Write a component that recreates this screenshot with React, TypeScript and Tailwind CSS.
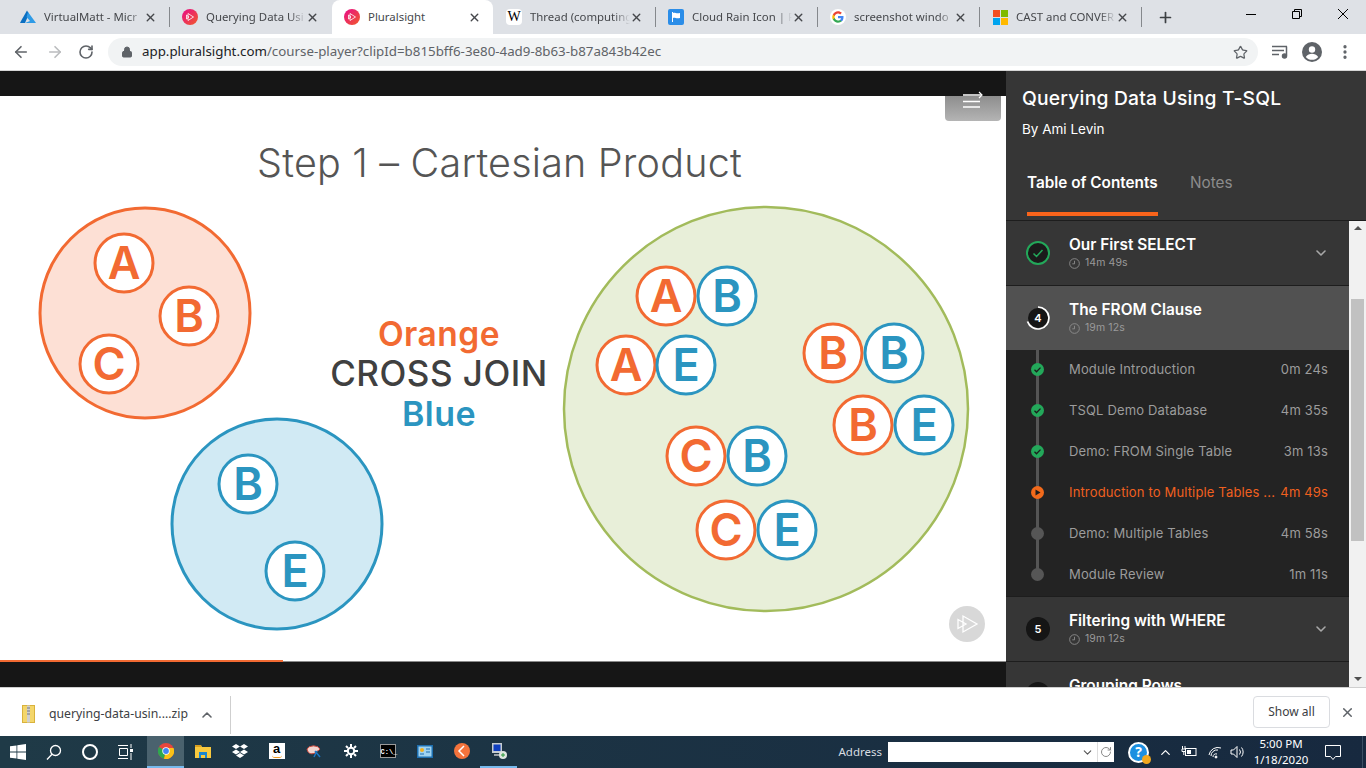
import { ArrowLeft, ArrowRight, ChevronDown, ChevronUp, Lock, MoreVertical, Plus, RotateCw, Star, X } from 'lucide-react'
import type { ReactNode } from 'react'

const UI = "font-['Noto_Sans',sans-serif]"
const PS = "font-['Inter',sans-serif]"

function PsIcon() {
  return (
    <svg width="16" height="16" viewBox="0 0 16 16">
      <defs>
        <linearGradient id="ps" x1="0" y1="0" x2="1" y2="1">
          <stop offset="0" stopColor="#e80a89" />
          <stop offset="1" stopColor="#f15b2a" />
        </linearGradient>
      </defs>
      <circle cx="8" cy="8" r="8" fill="url(#ps)" />
      <path d="M6 4.500v7L11.500 8zM4.500 6v4L7 8z" fill="none" stroke="#fff" strokeWidth="0.800" />
    </svg>
  )
}

function AzureIcon() {
  return (
    <svg width="16" height="14" viewBox="0 0 16 14">
      <path d="M7 0.500 L1 11 L0 13 H5 L9 4z" fill="#0a6fc2" />
      <path d="M8 2 L16 13 H5 L10 11 L6.500 7z" fill="#2f9be6" />
    </svg>
  )
}

function WikiIcon() {
  return (
    <span className="flex h-4 w-4 items-center justify-center rounded-sm bg-white font-['Liberation_Serif',serif] text-[14px] leading-none text-black">
      W
    </span>
  )
}

function FlagIcon() {
  return (
    <svg width="16" height="16" viewBox="0 0 16 16">
      <rect width="16" height="16" rx="2" fill="#2b8de8" />
      <path d="M4 3h1v10H4zM5 4c2-1 3 1 7 0v5c-4 1-5-1-7 0z" fill="#fff" />
    </svg>
  )
}

function GoogleIcon() {
  return (
    <span className="flex h-4 w-4 items-center justify-center rounded-full bg-white">
      <svg width="12" height="12" viewBox="0 0 48 48">
        <path fill="#4285f4" d="M46 24.500c0-1.600-.1-3.100-.4-4.500H24v8.500h12.400c-.5 2.900-2.100 5.300-4.600 7v5.800h7.400C43.500 37.800 46 31.700 46 24.500z" />
        <path fill="#34a853" d="M24 47c6.200 0 11.400-2 15.200-5.700l-7.400-5.800c-2 1.400-4.700 2.200-7.800 2.200-6 0-11.100-4-12.900-9.500H3.500v6C7.300 41.800 15 47 24 47z" />
        <path fill="#fbbc05" d="M11.100 28.200c-.5-1.400-.7-2.800-.7-4.200s.3-2.900.7-4.200v-6H3.500C2 16.900 1 20.300 1 24s.9 7.100 2.500 10.200z" />
        <path fill="#ea4335" d="M24 10.300c3.400 0 6.400 1.200 8.800 3.400l6.600-6.600C35.400 3.400 30.200 1 24 1 15 1 7.300 6.200 3.500 13.800l7.600 6C12.900 14.300 18 10.300 24 10.300z" />
      </svg>
    </span>
  )
}

function MsIcon() {
  return (
    <span className="grid h-[15px] w-[15px] grid-cols-2 gap-px">
      <span className="bg-[#f25022]" />
      <span className="bg-[#7fba00]" />
      <span className="bg-[#00a4ef]" />
      <span className="bg-[#ffb900]" />
    </span>
  )
}

const tabs: { title: string; icon: ReactNode; active?: boolean; sep: boolean }[] = [
  { title: 'VirtualMatt - Micr', icon: <AzureIcon />, sep: true },
  { title: 'Querying Data Usi', icon: <PsIcon />, sep: false },
  { title: 'Pluralsight', icon: <PsIcon />, active: true, sep: false },
  { title: 'Thread (computing', icon: <WikiIcon />, sep: true },
  { title: 'Cloud Rain Icon | F', icon: <FlagIcon />, sep: true },
  { title: 'screenshot windo', icon: <GoogleIcon />, sep: true },
  { title: 'CAST and CONVER', icon: <MsIcon />, sep: true },
]

function ChromeTabs() {
  return (
    <div className={`flex h-[34px] shrink-0 items-end bg-[#dee1e6] pl-2 ${UI}`}>
      {tabs.map((tab) => (
        <div key={tab.title} className="flex h-[34px] w-[162px] shrink-0 items-center">
          <div
            className={`relative flex h-full flex-1 items-center pl-3 ${tab.active ? 'rounded-t-lg bg-white' : ''}`}
          >
            <span className="flex w-4 shrink-0 justify-center">{tab.icon}</span>
            <span
              className={`ml-2 w-[100px] text-[11.400px] whitespace-nowrap text-[#45474b] ${tab.active ? '' : '[mask-image:linear-gradient(to_right,black_84%,transparent)]'}`}
            >
              {tab.title}
            </span>
            <X className="h-[13px] w-[13px] text-[#45474b]" strokeWidth={2.6} />
          </div>
          <span className={`h-[20px] w-px ${tab.sep ? 'bg-[#85888c]' : ''}`} />
        </div>
      ))}
      <div className="flex h-[34px] w-[46px] items-center justify-center">
        <Plus className="h-[17px] w-[17px] text-[#3c4043]" strokeWidth={2.4} />
      </div>
      <div className="ml-auto flex h-[28px] items-center self-start">
        <div className="flex w-[46px] justify-center">
          <span className="h-px w-[10px] bg-black" />
        </div>
        <div className="flex w-[46px] justify-center">
          <svg width="10" height="10" viewBox="0 0 10 10" fill="none" stroke="#000">
            <path d="M0.500 2.500h7v7h-7zM2.500 2.500v-2h7v7h-2" />
          </svg>
        </div>
        <div className="flex w-[46px] justify-center">
          <svg width="10" height="10" viewBox="0 0 10 10" stroke="#000">
            <path d="M0 0l10 10M10 0L0 10" />
          </svg>
        </div>
      </div>
    </div>
  )
}

function Toolbar() {
  return (
    <div className={`flex h-[37px] shrink-0 items-center border-b border-[#d6d6d6] bg-white ${UI}`}>
      <div className="flex w-[108px] shrink-0 items-center pl-3">
        <ArrowLeft className="h-[18px] w-[18px] text-[#5f6368]" strokeWidth={2.2} />
        <ArrowRight className="ml-4 h-[18px] w-[18px] text-[#babcbe]" strokeWidth={2.2} />
        <RotateCw className="ml-[14px] h-[16px] w-[16px] text-[#5f6368]" strokeWidth={2.4} />
      </div>
      <div className="flex h-[28px] w-[1150px] items-center rounded-full bg-[#f1f3f4] pr-[10px] pl-[13px]">
        <Lock className="h-[12px] w-[12px] fill-[#5f6368] text-[#5f6368]" strokeWidth={2} />
        <span className="ml-[9px] text-[13.320px] whitespace-nowrap text-[#5f6368]">
          <span className="text-[#202124]">app.pluralsight.com</span>/course-player?clipId=b815bff6-3e80-4ad9-8b63-b87a843b42ec
        </span>
        <Star className="ml-auto h-[15px] w-[15px] text-[#5f6368]" strokeWidth={2} />
      </div>
      <svg className="ml-[13px]" width="18" height="14" viewBox="0 0 18 14" fill="none" stroke="#5f6368" strokeWidth="1.500">
        <path d="M1 1.500h15M1 5.500h12M1 9.500h7" />
        <path d="M15.500 1.500v9" />
        <circle cx="13.500" cy="11" r="2" fill="#5f6368" />
      </svg>
      <svg className="ml-[13px]" width="20" height="20" viewBox="0 0 20 20">
        <circle cx="10" cy="10" r="10" fill="#5f6368" />
        <circle cx="10" cy="7.500" r="3.200" fill="#fff" />
        <path d="M3.800 15c1.400-2.300 4-3.300 6.200-3.300s4.800 1 6.200 3.300c-3.200 3.800-9.200 3.800-12.400 0z" fill="#fff" />
      </svg>
      <MoreVertical className="ml-[14px] h-[18px] w-[18px] text-[#5f6368]" strokeWidth={2.4} />
    </div>
  )
}

const ORANGE = '#f26a32'
const BLUE = '#2b95c0'

const nodes: [string, number, number, string][] = [
  ['A', 124, 263, ORANGE],
  ['B', 189, 316, ORANGE],
  ['C', 109, 364, ORANGE],
  ['B', 248, 484, BLUE],
  ['E', 295, 571, BLUE],
  ['A', 666, 296, ORANGE],
  ['B', 727, 296, BLUE],
  ['A', 626, 365, ORANGE],
  ['E', 686, 365, BLUE],
  ['B', 833, 353, ORANGE],
  ['B', 894, 353, BLUE],
  ['B', 863, 425, ORANGE],
  ['E', 924, 425, BLUE],
  ['C', 696, 456, ORANGE],
  ['B', 757, 456, BLUE],
  ['C', 726, 530, ORANGE],
  ['E', 787, 530, BLUE],
]

function Slide() {
  return (
    <svg className="block h-[564px] w-[1006px]" viewBox="0 96 1006 564" style={{ fontFamily: 'Inter, sans-serif' }}>
      <rect x="0" y="96" width="1006" height="564" fill="#fff" />
      <text x="499.500" y="177" textAnchor="middle" fontSize="39.500" fontWeight="300" letterSpacing="0.200" fill="#555555">
        Step 1 – Cartesian Product
      </text>
      <circle cx="145" cy="313" r="105" fill="#fde0d5" stroke={ORANGE} strokeWidth="3" />
      <circle cx="277" cy="524" r="105" fill="#d1eaf4" stroke={BLUE} strokeWidth="3" />
      <circle cx="766" cy="409" r="202" fill="#e8efd9" stroke="#a2bb5b" strokeWidth="2.500" />
      <text x="439" y="346" textAnchor="middle" fontSize="33.500" fontWeight="600" letterSpacing="0.500" fill={ORANGE}>
        Orange
      </text>
      <text x="439" y="386" textAnchor="middle" fontSize="35" fontWeight="500" letterSpacing="0.500" fill="#404040">
        CROSS JOIN
      </text>
      <text x="439" y="426" textAnchor="middle" fontSize="34" fontWeight="600" letterSpacing="0.500" fill={BLUE}>
        Blue
      </text>
      {nodes.map(([letter, x, y, color], i) => (
        <g key={i}>
          <circle cx={x} cy={y} r="29" fill="#fff" stroke={color} strokeWidth="3" />
          <text x={x} y={y + 16} textAnchor="middle" fontSize="45" fontWeight="600" fill={color}>
            {letter}
          </text>
        </g>
      ))}
    </svg>
  )
}

function Player() {
  return (
    <div className="relative flex w-[1006px] shrink-0 flex-col bg-[#161616]">
      <div className="h-[25px] shrink-0" />
      <Slide />
      <div className="flex h-[2px] shrink-0">
        <div className="h-full w-[283px] bg-[#f26a32]" />
        <div className="flex-1">
          <div className="h-px bg-white" />
          <div className="h-px bg-[#8a8a8a]" />
        </div>
      </div>
      <div className="flex-1" />
      {/* Menu button over the slide */}
      <div className="absolute top-[25px] right-[5px] h-[25px] w-[56px] rounded-b-sm bg-gradient-to-b from-[#8e8e8e] to-[#b4b4b4]" />
      <svg className="absolute top-[19px] left-[962px]" width="22" height="18" viewBox="0 0 22 18" fill="none" stroke="#fff" strokeWidth="1.500">
        <path d="M1 5h18M1 11.500h17M1 17h17" />
        <path d="M17 2l3 3-3 3" strokeWidth="1.200" />
      </svg>
      <div className="absolute top-[535px] left-[949px] flex h-9 w-9 items-center justify-center rounded-full bg-[#d8d8d8]">
        <svg width="24" height="24" viewBox="0 0 24 24" fill="none" stroke="#fff" strokeWidth="1.300">
          <path d="M8 4v16l14-8zM3 7.500v9l8-4.500z" />
        </svg>
      </div>
    </div>
  )
}

function Clock() {
  return (
    <svg width="11" height="11" viewBox="0 0 10 10" fill="none" stroke="#8f8f8f" strokeWidth="0.800">
      <circle cx="5" cy="5" r="4.400" />
      <path d="M5 2.500V5.300H3" />
    </svg>
  )
}

function ModuleRow({ title, time, badge, bg = 'bg-[#363636]', chevron = true }: { title: string; time: string; badge: ReactNode; bg?: string; chevron?: boolean }) {
  return (
    <div className={`relative h-[64px] shrink-0 ${bg}`}>
      <div className="flex h-full items-start pr-5 pl-5">
        <div className="mt-5 flex h-6 w-6 shrink-0 items-center justify-center">{badge}</div>
        <div className="ml-[19px] flex-1 pt-[14px]">
          <div className="text-[15.400px] leading-[20px] font-semibold text-white">{title}</div>
          <div className="flex items-center gap-[5px] text-[10.500px] leading-[16px] tracking-[0.1px] text-[#9a9a9a]">
            <Clock />
            {time}
          </div>
        </div>
        {chevron && <ChevronDown className="mt-6 h-[16px] w-[16px] text-[#a8a8a8]" strokeWidth={2.400} />}
      </div>
    </div>
  )
}

const clips = [
  { title: 'Module Introduction', time: '0m 24s', state: 'done' },
  { title: 'TSQL Demo Database', time: '4m 35s', state: 'done' },
  { title: 'Demo: FROM Single Table', time: '3m 13s', state: 'done' },
  { title: 'Introduction to Multiple Tables ...', time: '4m 49s', state: 'now' },
  { title: 'Demo: Multiple Tables', time: '4m 58s', state: 'todo' },
  { title: 'Module Review', time: '1m 11s', state: 'todo' },
]

function ClipDot({ state }: { state: string }) {
  if (state === 'done')
    return (
      <svg width="13" height="13" viewBox="0 0 13 13">
        <circle cx="6.500" cy="6.500" r="6.500" fill="#23a85a" />
        <path d="M3.500 6.800l2 2 4-4.200" fill="none" stroke="#1c1c1c" strokeWidth="1.300" />
      </svg>
    )
  if (state === 'now')
    return (
      <svg width="13" height="13" viewBox="0 0 13 13">
        <circle cx="6.500" cy="6.500" r="6.500" fill="#f26a1b" />
        <path d="M4.500 3.500v6l5-3z" fill="#1c1c1c" />
      </svg>
    )
  return <span className="block h-[13px] w-[13px] rounded-full bg-[#565656]" />
}

function ClipList() {
  return (
    <div className="relative shrink-0 bg-[#232323]">
      {/* The rail that joins the dots */}
      <div className="absolute top-0 left-[30px] h-[224px] w-[3px] bg-[#555555]" />
      {clips.map((clip) => (
        <div
          key={clip.title}
          className={`relative flex h-[41px] items-center pr-[21px] pb-[2px] pl-[25px] text-[13px] tracking-[0.15px] ${clip.state === 'now' ? 'text-[#f0601f]' : 'text-[#9c9c9c]'}`}
        >
          <span className="flex w-[13px] justify-center">
            <ClipDot state={clip.state} />
          </span>
          <span className="ml-[25px] flex-1 whitespace-nowrap">{clip.title}</span>
          <span className="whitespace-nowrap">{clip.time}</span>
        </div>
      ))}
    </div>
  )
}

function Sidebar() {
  return (
    <div className={`flex w-[360px] shrink-0 flex-col bg-[#363636] ${PS}`}>
      <div className="h-[150px] shrink-0 border-b border-[#1d1d1d] pl-4">
        <h1 className="pt-[15px] text-[19.300px] leading-[24px] font-medium tracking-[0.2px] text-white">Querying Data Using T-SQL</h1>
        <p className="mt-[10px] text-[13.500px] leading-[18px] text-white">By Ami Levin</p>
        <div className="mt-[35px] flex pl-[5px] text-[15.300px] leading-[20px]">
          <div className="h-[43px] w-[131px] border-b-[4px] border-[#f9641b] font-semibold whitespace-nowrap text-white">Table of Contents</div>
          <div className="ml-8 text-[#8c8c8c]">Notes</div>
        </div>
      </div>
      <div className="flex min-h-0 flex-1">
        <div className="flex-1 overflow-hidden">
          <ModuleRow
            title="Our First SELECT"
            time="14m 49s"
            badge={
              <svg width="24" height="24" viewBox="0 0 24 24" fill="none">
                <circle cx="12" cy="12" r="11" stroke="#23a85a" strokeWidth="2" fill="#1b1b1b" />
                <path d="M7.500 12.500l3 3 6-6.500" stroke="#23a85a" strokeWidth="1.500" />
              </svg>
            }
          />
          <div className="h-px bg-[#1d1d1d]" />
          <ModuleRow
            title="The FROM Clause"
            time="19m 12s"
            bg="bg-[#515151]"
            chevron={false}
            badge={
              <span className="relative flex h-6 w-6 items-center justify-center">
                <svg className="absolute inset-0" width="24" height="24" viewBox="0 0 24 24" fill="none">
                  <circle cx="12" cy="12" r="10" fill="#151515" />
                  <path d="M12 1a11 11 0 1 1-10.500 14.500" stroke="#fff" strokeWidth="1.700" />
                </svg>
                <span className="relative text-[11px] font-semibold text-white">4</span>
              </span>
            }
          />
          <ClipList />
          <div className="h-px bg-[#1d1d1d]" />
          <ModuleRow
            title="Filtering with WHERE"
            time="19m 12s"
            badge={<span className="flex h-6 w-6 items-center justify-center rounded-full bg-[#151515] text-[11px] font-semibold text-white">5</span>}
          />
          <div className="h-px bg-[#1d1d1d]" />
          <ModuleRow
            title="Grouping Rows"
            time="19m 12s"
            badge={<span className="flex h-6 w-6 items-center justify-center rounded-full bg-[#151515] text-[11px] font-semibold text-white">6</span>}
          />
        </div>
        <div className="flex w-[17px] shrink-0 flex-col items-center bg-[#f1f1f1]">
          <span className="mt-[5px] h-0 w-0 border-x-[4px] border-b-[4px] border-x-transparent border-b-[#505050]" />
          <span className="mt-[69px] h-[242px] w-[13px] bg-[#c1c1c1]" />
          <span className="mt-auto mb-[6px] h-0 w-0 border-x-[4px] border-t-[4px] border-x-transparent border-t-[#505050]" />
        </div>
      </div>
    </div>
  )
}

function DownloadBar() {
  return (
    <div className={`flex h-[49px] shrink-0 items-center border-t border-[#cfcfcf] bg-white ${UI}`}>
      <div className="flex items-center pt-[5px]">
        <svg className="ml-[22px] -translate-y-[1px]" width="13" height="18" viewBox="0 0 13 18">
          <rect x="0.500" y="0.500" width="12" height="17" fill="#f4d66a" stroke="#d9b23c" />
          <rect x="5" y="0.500" width="3" height="17" fill="#cfcfcf" />
          <path d="M5 3h3M5 6h3M5 9h3" stroke="#777" />
        </svg>
        <span className="ml-[14px] text-[12.250px] whitespace-nowrap text-[#3c4043]">querying-data-usin....zip</span>
        <ChevronUp className="ml-[11px] h-[16px] w-[16px] text-[#5f6368]" strokeWidth={2.400} />
        <span className="ml-[15px] h-[38px] w-px bg-[#cfcfcf]" />
      </div>
      <div className="ml-auto flex h-8 w-[77px] items-center justify-center rounded-[4px] border border-[#dadce0] text-[12px] text-[#3c4043]">
        Show all
      </div>
      <X className="mr-[11px] ml-[10px] h-[15px] w-[15px] text-[#5f6368]" strokeWidth={2.400} />
    </div>
  )
}

function ChromeLogo() {
  return (
    <svg width="16" height="16" viewBox="0 0 16 16">
      <circle cx="8" cy="8" r="8" fill="#e8453c" />
      <path d="M8 8L1 4A8 8 0 0 0 6 15.800z" fill="#2da94f" />
      <path d="M8 8l-2 7.800A8 8 0 0 0 15.500 5H8z" fill="#fbc116" />
      <circle cx="8" cy="8" r="3.700" fill="#fff" />
      <circle cx="8" cy="8" r="2.900" fill="#4285f4" />
    </svg>
  )
}

const systemIcons: { key: string; icon: ReactNode }[] = [
  {
    key: 'search',
    icon: (
      <svg width="16" height="16" viewBox="0 0 16 16" fill="none" stroke="#fff" strokeWidth="1.300">
        <circle cx="9.500" cy="6.500" r="5" />
        <path d="M6 10.200L1 15.500" />
      </svg>
    ),
  },
  {
    key: 'cortana',
    icon: <span className="block h-[16px] w-[16px] rounded-full border-[2.500px] border-white" />,
  },
  {
    key: 'taskview',
    icon: (
      <svg width="16" height="16" viewBox="0 0 16 16" fill="none" stroke="#fff">
        <path d="M0 1.500h10M1.500 4.500h8v7h-8zM0 14.500h10M13 0v4M13 9v7" />
        <rect x="12" y="5" width="3" height="3" fill="#fff" stroke="none" />
      </svg>
    ),
  },
]

const taskIcons: { key: string; icon: ReactNode; active?: boolean; running?: boolean }[] = [
  { key: 'chrome', icon: <ChromeLogo />, active: true },
  {
    key: 'explorer',
    icon: (
      <svg width="16" height="14" viewBox="0 0 16 14">
        <path d="M0 1h6l1 2h9v11H0z" fill="#f8c93e" />
        <rect y="1" width="6" height="2" fill="#d89f20" />
        <path d="M4 8h8v6h-2v-3H6v3H4z" fill="#1a86d0" />
      </svg>
    ),
  },
  {
    key: 'dropbox',
    icon: (
      <svg width="16" height="14" viewBox="0 0 16 14" fill="#fff">
        <path d="M4 0l4 2.500L4 5 0 2.500zM12 0l4 2.500L12 5 8 2.500zM4 5.500L8 8l-4 2.500L0 8zM12 5.500L16 8l-4 2.500L8 8zM4 11.500l4-2.500 4 2.500L8 14z" />
      </svg>
    ),
  },
  {
    key: 'amazon',
    icon: (
      <span className="relative flex h-4 w-4 justify-center bg-white font-['Liberation_Sans',sans-serif] text-[13px] leading-[12px] font-bold text-black">
        a
        <span className="absolute bottom-[1px] left-[3px] h-[3px] w-[10px] rounded-b-full border-b border-[#f29a1e]" />
      </span>
    ),
  },
  {
    key: 'snip',
    icon: (
      <svg width="16" height="16" viewBox="0 0 16 16">
        <path d="M1 6a7 5 0 0 1 13 0c-1 2-4 2-5 4-2 1-7 2-8-4z" fill="#f2d5d0" stroke="#c9453a" />
        <path d="M9 8l5 6M11 8l-3 6" stroke="#1a75c4" strokeWidth="1.500" />
      </svg>
    ),
  },
  {
    key: 'gear',
    icon: (
      <svg width="14" height="14" viewBox="0 0 14 14" fill="none" stroke="#fff">
        <circle cx="7" cy="7" r="3.200" strokeWidth="2" />
        <path d="M7 0v3M7 11v3M0 7h3M11 7h3M2 2l2 2M10 10l2 2M12 2l-2 2M4 10l-2 2" strokeWidth="2" />
      </svg>
    ),
  },
  {
    key: 'cmd',
    icon: (
      <span className="flex h-[14px] w-4 items-end border border-[#9a9a9a] bg-black font-['Liberation_Mono',monospace] text-[7px] leading-[10px] font-bold text-white">
        C:\_
      </span>
    ),
  },
  {
    key: 'panel',
    icon: (
      <svg width="16" height="13" viewBox="0 0 16 13">
        <rect width="16" height="13" fill="#1d6fb0" />
        <rect x="1.500" y="1.500" width="13" height="10" fill="#9fd3f2" />
        <circle cx="5" cy="5" r="2" fill="#f2b01e" />
        <path d="M9 4h4M9 7h4M3 9h4" stroke="#1d6fb0" />
      </svg>
    ),
  },
  {
    key: 'orange',
    icon: (
      <svg width="16" height="16" viewBox="0 0 16 16">
        <circle cx="8" cy="8" r="8" fill="#f4733c" />
        <path d="M10 3L5 8l5 5" fill="none" stroke="#fff" strokeWidth="1.500" />
      </svg>
    ),
  },
  {
    key: 'remote',
    running: true,
    icon: (
      <svg width="16" height="16" viewBox="0 0 16 16">
        <rect x="1" y="0" width="10" height="10" fill="#c5ccd2" />
        <rect x="2.500" y="1.500" width="7" height="6.500" fill="#0f3fc0" />
        <rect x="3" y="11" width="8" height="2" fill="#9aa2a8" />
        <circle cx="12" cy="12" r="4" fill="#dfe5e0" />
        <path d="M10 12h4M12 10v4" stroke="#2a9a3a" />
      </svg>
    ),
  },
]

function Taskbar() {
  return (
    <div className={`flex h-[32px] shrink-0 items-center bg-gradient-to-r from-[#1f3a47] to-[#17293f] ${UI}`}>
      <div className="flex w-[36px] shrink-0 justify-end pr-[10px]">
        <svg width="16" height="16" viewBox="0 0 16 16" fill="#fff">
          <path d="M0 2.300l6.500-.9v6.200H0zM7.300 1.300L16 0v7.600H7.300zM0 8.400h6.500v6.200L0 13.700zM7.300 8.400H16V16l-8.700-1.300z" />
        </svg>
      </div>
      <div className="flex w-[111px] shrink-0">
        {systemIcons.map((item) => (
          <div key={item.key} className="flex h-[32px] w-[36px] items-center justify-center">
            {item.icon}
          </div>
        ))}
      </div>
      <div className="flex">
        {taskIcons.map((item) => (
          <div
            key={item.key}
            className={`flex h-[32px] w-[37px] items-center justify-center border-b-2 ${item.active ? 'border-[#76b9ed] bg-[#4a626e]' : item.running ? 'border-[#76b9ed]' : 'border-transparent'}`}
          >
            {item.icon}
          </div>
        ))}
      </div>
      <span className="ml-auto text-[11.500px] text-[#d8dde0]">Address</span>
      <div className="ml-[6px] flex h-[20px] w-[226px] items-center justify-end bg-white">
        <ChevronDown className="h-[13px] w-[13px] text-[#555]" />
        <span className="ml-[3px] h-full w-px bg-[#ddd]" />
        <RotateCw className="mx-[2px] h-[12px] w-[12px] text-[#8a8a8a]" />
      </div>
      <div className="relative ml-[14px] flex h-[21px] w-[21px] items-center justify-center rounded-full border-[2px] border-white bg-[#1c8fe0] text-[14px] leading-none font-bold text-white">
        ?
        <span className="absolute -right-[4px] -bottom-[3px] h-[9px] w-[9px] rounded-full bg-[#f2a81e]" />
      </div>
      <ChevronUp className="ml-[9px] h-[15px] w-[15px] text-white" />
      <svg className="ml-[8px]" width="16" height="12" viewBox="0 0 16 12" fill="none" stroke="#fff">
        <rect x="4.500" y="2.500" width="10.500" height="7" />
        <path d="M1.500 0v3M4 0v3M1 3h3.500v2.500H1zM2.800 5.500V9" />
        <rect x="6" y="4" width="4" height="4" fill="#fff" stroke="none" />
      </svg>
      <svg className="ml-[11px]" width="14" height="14" viewBox="0 0 14 14" fill="none" stroke="#fff">
        <path d="M1 10a9 9 0 0 1 12-7M3 11a6 6 0 0 1 7-6M5 12a3 3 0 0 1 4-3" />
        <circle cx="8" cy="12" r="1" fill="#fff" />
      </svg>
      <svg className="ml-[8px]" width="16" height="14" viewBox="0 0 16 14" fill="none" stroke="#fff">
        <path d="M1 5h2.500L7 1.500v11L3.500 9H1z" />
        <path d="M9.500 4.500a4 4 0 0 1 0 5M11.500 2.500a7 7 0 0 1 0 9" />
      </svg>
      <div className="ml-[6px] flex w-[58px] flex-col items-center text-[11.500px] leading-[16px] text-white">
        <span>5:00 PM</span>
        <span>1/18/2020</span>
      </div>
      <svg className="ml-[15px]" width="16" height="15" viewBox="0 0 16 15" fill="none" stroke="#fff">
        <path d="M0.500 0.500h15v11h-5l-2.500 3-2.500-3h-5z" />
      </svg>
      <span className="mr-[3px] ml-[21px] h-full w-px bg-[#3b4f63]" />
    </div>
  )
}

export default function App() {
  return (
    <div className="flex h-[768px] w-[1366px] flex-col overflow-hidden bg-white">
      <ChromeTabs />
      <Toolbar />
      <div className="flex h-[616px] shrink-0">
        <Player />
        <Sidebar />
      </div>
      <DownloadBar />
      <Taskbar />
    </div>
  )
}
